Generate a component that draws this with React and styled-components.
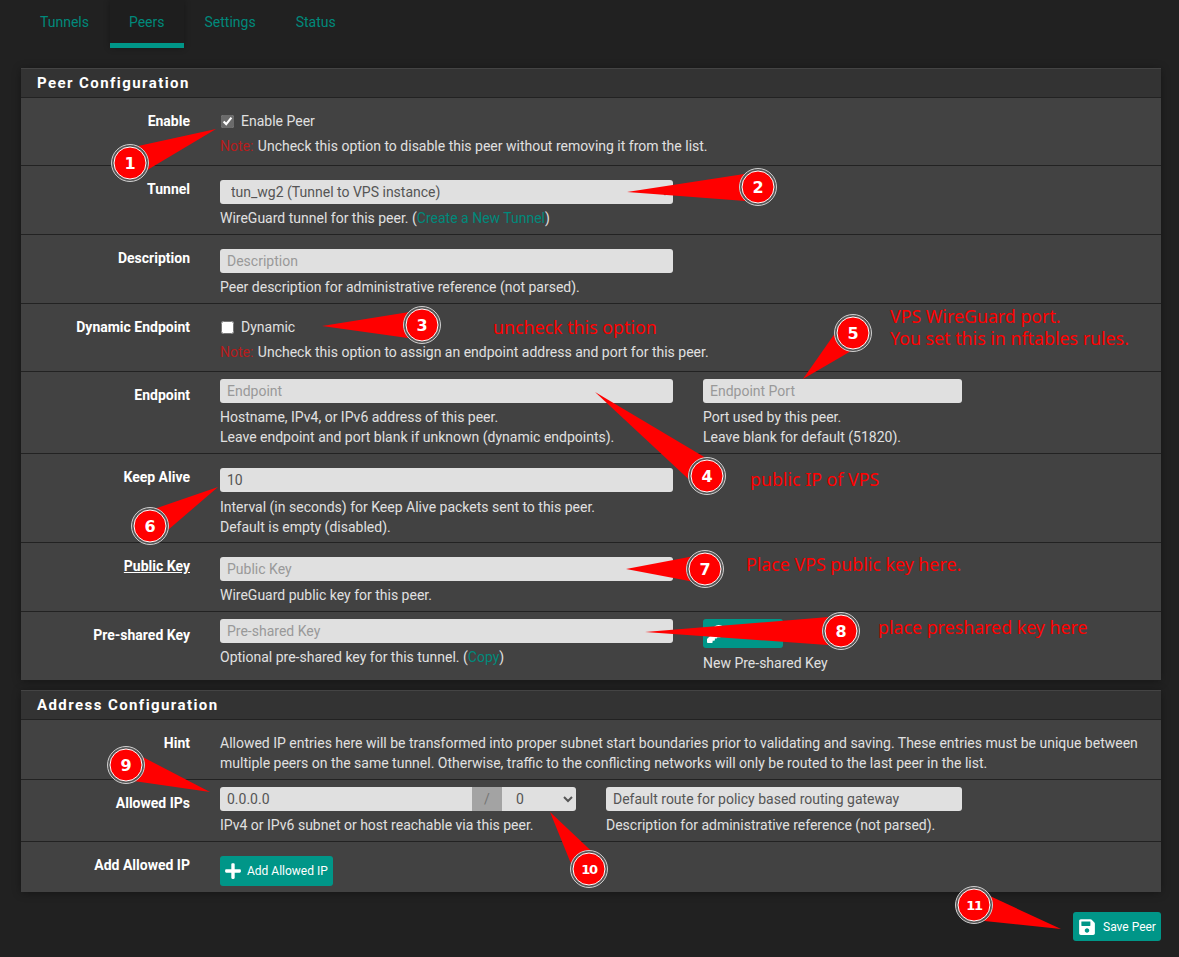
import React from "react";
import styled, { createGlobalStyle } from "styled-components";
import { FaKey, FaPlus, FaSave } from "react-icons/fa";

const GlobalStyle = createGlobalStyle`
  html, body {
    margin: 0;
    padding: 0;
    background: #212121;
  }
  body {
    font-family: Roboto, "Liberation Sans", sans-serif;
    font-size: 14px;
    line-height: 20px;
    color: #e0e0e0;
  }
`;

const Page = styled.div`
  position: relative;
  width: 1179px;
  height: 957px;
  overflow: hidden;
  box-sizing: border-box;
  padding: 0 18px 0 21px;
  background: #212121;
`;

const Tabs = styled.nav`
  display: flex;
  gap: 2px;
  height: 48px;
  margin-bottom: 20px;
`;

const Tab = styled.a`
  box-sizing: border-box;
  height: 48px;
  padding: 12px 19px 0;
  color: #00897b;
  background: ${(p) => (p.$active ? "#1e1e1e" : "transparent")};
  border-bottom: 5px solid ${(p) => (p.$active ? "#009688" : "transparent")};
  box-shadow: ${(p) => (p.$active ? "0 0 6px rgba(0,0,0,0.3)" : "none")};
`;

const Panel = styled.section`
  background: #424242;
  box-shadow: 0 1px 8px rgba(0, 0, 0, 0.35);
  margin-bottom: ${(p) => p.$after}px;
`;

const PanelHeading = styled.h2`
  box-sizing: border-box;
  height: 30px;
  margin: 0;
  padding: 4px 16px 0;
  background: #333333;
  border-top: 1px solid #444444;
  border-bottom: 1px solid #222222;
  font-size: 15px;
  line-height: 20px;
  font-weight: 700;
  letter-spacing: 1.42px;
  color: #ffffff;
`;

const Row = styled.div`
  box-sizing: border-box;
  display: grid;
  grid-template-columns: 169px 1fr;
  column-gap: 30px;
  height: ${(p) => p.$h}px;
  border-bottom: ${(p) => (p.$last ? "none" : "1px solid #222222")};
`;

const Label = styled.div`
  padding-top: 13px;
  text-align: right;
  font-weight: 700;
  color: #ffffff;
  text-decoration: ${(p) => (p.$underline ? "underline" : "none")};
`;

const Fields = styled.div`
  display: flex;
  gap: 30px;
  padding-top: ${(p) => p.$top}px;
`;

const Field = styled.div`
  width: ${(p) => p.$w}px;
`;

const TextInput = styled.input`
  box-sizing: border-box;
  display: block;
  width: 100%;
  height: 24px;
  padding: 0 7px;
  background: #e0e0e0;
  border: 0;
  border-radius: 3px;
  font: 14px Roboto, sans-serif;
  color: #555555;
  &::placeholder {
    color: #999999;
    opacity: 1;
  }
`;

const Select = styled.select`
  box-sizing: border-box;
  display: block;
  width: 100%;
  height: 24px;
  padding: 0 7px;
  background: #e0e0e0;
  border: 0;
  border-radius: 3px;
  font: 14px Roboto, sans-serif;
  color: #555555;
`;

const Help = styled.div`
  margin-top: ${(p) => p.$mt ?? 4}px;
`;

const Note = styled.span`
  color: #b71c1c;
  margin-right: 1px;
`;

const Link = styled.a`
  color: #00897b;
`;

const CheckLine = styled.label`
  display: flex;
  align-items: center;
  height: 20px;
  gap: 7px;
  input {
    width: 13px;
    height: 13px;
    margin: 0 0 0 1px;
    accent-color: #6b6b6b;
  }
`;

const InputGroup = styled.div`
  display: flex;
  height: 24px;
`;

const GroupInput = styled(TextInput)`
  flex: 1;
  border-radius: 3px 0 0 3px;
`;

const GroupAddon = styled.span`
  width: 30px;
  text-align: center;
  line-height: 24px;
  background: #a3a3a3;
  color: #757575;
`;

const GroupSelect = styled(Select)`
  width: 74px;
  padding-left: 10px;
  border-radius: 0 3px 3px 0;
`;

const Button = styled.button`
  display: flex;
  align-items: center;
  gap: ${(p) => p.$gap ?? 5}px;
  box-sizing: border-box;
  height: ${(p) => p.$h ?? 30}px;
  width: ${(p) => p.$w}px;
  padding: 0 4px 0 ${(p) => p.$left ?? 4}px;
  background: #009688;
  border: 0;
  border-radius: 3px;
  font: 12px Roboto, sans-serif;
  color: #ffffff;
  white-space: nowrap;
  svg {
    flex: none;
    font-size: 18px;
  }
`;

const Footer = styled.div`
  display: flex;
  justify-content: flex-end;
`;

const Overlay = styled.svg`
  position: absolute;
  left: 0;
  top: 0;
  pointer-events: none;
`;

const BadgeNumber = styled.text`
  font-family: "DejaVu Sans", sans-serif;
  font-weight: 700;
  font-size: ${(p) => (p.$wide ? 13 : 16)}px;
  letter-spacing: ${(p) => (p.$wide ? "-1.2px" : "0")};
  fill: #ffffff;
  text-anchor: middle;
`;

const RedText = styled.div`
  position: absolute;
  left: ${(p) => p.$x}px;
  top: ${(p) => p.$y}px;
  font-family: "Noto Sans", sans-serif;
  font-size: 17.8px;
  line-height: 22px;
  color: #ff0000;
  white-space: nowrap;
`;

const callouts = [
  { n: 1, x: 130, y: 163, tx: 216, ty: 129 },
  { n: 2, x: 758, y: 187, tx: 627, ty: 192 },
  { n: 3, x: 422, y: 325, tx: 322, ty: 326 },
  { n: 4, x: 707, y: 476, tx: 595, ty: 392 },
  { n: 5, x: 853, y: 333, tx: 803, ty: 379 },
  { n: 6, x: 150, y: 526, tx: 218, ty: 487 },
  { n: 7, x: 705, y: 569, tx: 626, ty: 569 },
  { n: 8, x: 841, y: 631, tx: 645, ty: 632 },
  { n: 9, x: 126, y: 765, tx: 210, ty: 792 },
  { n: 10, x: 589, y: 869, tx: 550, ty: 812 },
  { n: 11, x: 974, y: 905, tx: 1061, ty: 929 },
];

const redNotes = [
  { x: 493, y: 316, text: "uncheck this option" },
  { x: 890, y: 305, text: "VPS WireGuard port." },
  { x: 890, y: 327, text: "You set this in nftables rules." },
  { x: 750, y: 468, text: "public IP of VPS" },
  { x: 746, y: 553, text: "Place VPS public key here." },
  { x: 878, y: 616, text: "place preshared key here" },
];

function tailPoints({ x, y, tx, ty }) {
  const dx = tx - x;
  const dy = ty - y;
  const len = Math.hypot(dx, dy);
  const px = (-dy / len) * 15;
  const py = (dx / len) * 15;
  return `${tx},${ty} ${x + px},${y + py} ${x - px},${y - py}`;
}

function Callout({ c }) {
  const wide = c.n > 9;
  return (
    <g>
      <polygon points={tailPoints(c)} fill="#ff0000" />
      <circle cx={c.x} cy={c.y} r="18.5" fill="#555555" stroke="#d0d0d0" strokeWidth="1" />
      <circle cx={c.x} cy={c.y} r="16" fill="#ff0000" stroke="#ffffff" strokeWidth="1" />
      <BadgeNumber x={c.x} y={c.y + (wide ? 5 : 6)} $wide={wide}>
        {c.n}
      </BadgeNumber>
    </g>
  );
}

export default function App() {
  return (
    <Page>
      <GlobalStyle />
      <Tabs>
        <Tab>Tunnels</Tab>
        <Tab $active>Peers</Tab>
        <Tab>Settings</Tab>
        <Tab>Status</Tab>
      </Tabs>

      <Panel $after={10}>
        <PanelHeading>Peer Configuration</PanelHeading>

        <Row $h={68}>
          <Label>Enable</Label>
          <Fields $top={13}>
            <Field $w={900}>
              <CheckLine>
                <input type="checkbox" defaultChecked />
                Enable Peer
              </CheckLine>
              <Help $mt={5}>
                <Note>Note:</Note> Uncheck this option to disable this peer without removing it from the list.
              </Help>
            </Field>
          </Fields>
        </Row>

        <Row $h={69}>
          <Label>Tunnel</Label>
          <Fields $top={14}>
            <Field $w={453}>
              <Select defaultValue="wg2">
                <option value="wg2">tun_wg2 (Tunnel to VPS instance)</option>
              </Select>
              <Help>
                WireGuard tunnel for this peer. (<Link>Create a New Tunnel</Link>)
              </Help>
            </Field>
          </Fields>
        </Row>

        <Row $h={69}>
          <Label>Description</Label>
          <Fields $top={14}>
            <Field $w={453}>
              <TextInput placeholder="Description" />
              <Help>Peer description for administrative reference (not parsed).</Help>
            </Field>
          </Fields>
        </Row>

        <Row $h={68}>
          <Label>Dynamic Endpoint</Label>
          <Fields $top={13}>
            <Field $w={900}>
              <CheckLine>
                <input type="checkbox" />
                Dynamic
              </CheckLine>
              <Help $mt={5}>
                <Note>Note:</Note> Uncheck this option to assign an endpoint address and port for this peer.
              </Help>
            </Field>
          </Fields>
        </Row>

        <Row $h={82}>
          <Label>Endpoint</Label>
          <Fields $top={7}>
            <Field $w={453}>
              <TextInput placeholder="Endpoint" />
              <Help>
                Hostname, IPv4, or IPv6 address of this peer.
                <br />
                Leave endpoint and port blank if unknown (dynamic endpoints).
              </Help>
            </Field>
            <Field $w={259}>
              <TextInput placeholder="Endpoint Port" />
              <Help>
                Port used by this peer.
                <br />
                Leave blank for default (51820).
              </Help>
            </Field>
          </Fields>
        </Row>

        <Row $h={89}>
          <Label>Keep Alive</Label>
          <Fields $top={14}>
            <Field $w={453}>
              <TextInput defaultValue="10" />
              <Help $mt={5}>
                Interval (in seconds) for Keep Alive packets sent to this peer.
                <br />
                Default is empty (disabled).
              </Help>
            </Field>
          </Fields>
        </Row>

        <Row $h={69}>
          <Label $underline>Public Key</Label>
          <Fields $top={14}>
            <Field $w={453}>
              <TextInput placeholder="Public Key" />
              <Help>WireGuard public key for this peer.</Help>
            </Field>
          </Fields>
        </Row>

        <Row $h={68} $last>
          <Label>Pre-shared Key</Label>
          <Fields $top={7}>
            <Field $w={453}>
              <TextInput placeholder="Pre-shared Key" />
              <Help>
                Optional pre-shared key for this tunnel. (<Link>Copy</Link>)
              </Help>
            </Field>
            <Field $w={259}>
              <Button $w={80} $h={29}>
                <FaKey />
                Generate
              </Button>
              <Help $mt={5}>New Pre-shared Key</Help>
            </Field>
          </Fields>
        </Row>
      </Panel>

      <Panel $after={20}>
        <PanelHeading>Address Configuration</PanelHeading>

        <Row $h={60}>
          <Label>Hint</Label>
          <Fields $top={13}>
            <Field $w={925}>
              Allowed IP entries here will be transformed into proper subnet start boundaries prior to validating and
              saving. These entries must be unique between multiple peers on the same tunnel. Otherwise, traffic to the
              conflicting networks will only be routed to the last peer in the list.
            </Field>
          </Fields>
        </Row>

        <Row $h={62}>
          <Label>Allowed IPs</Label>
          <Fields $top={7}>
            <Field $w={356}>
              <InputGroup>
                <GroupInput defaultValue="0.0.0.0" />
                <GroupAddon>/</GroupAddon>
                <GroupSelect defaultValue="0">
                  <option value="0">0</option>
                </GroupSelect>
              </InputGroup>
              <Help>IPv4 or IPv6 subnet or host reachable via this peer.</Help>
            </Field>
            <Field $w={356}>
              <TextInput defaultValue="Default route for policy based routing gateway" />
              <Help>Description for administrative reference (not parsed).</Help>
            </Field>
          </Fields>
        </Row>

        <Row $h={50} $last>
          <Label>Add Allowed IP</Label>
          <Fields $top={14}>
            <Button $w={113}>
              <FaPlus />
              Add Allowed IP
            </Button>
          </Fields>
        </Row>
      </Panel>

      <Footer>
        <Button $w={88} $h={29} $left={5} $gap={7}>
          <FaSave />
          Save Peer
        </Button>
      </Footer>

      <Overlay width="1179" height="957" viewBox="0 0 1179 957">
        {callouts.map((c) => (
          <Callout key={c.n} c={c} />
        ))}
      </Overlay>
      {redNotes.map((note) => (
        <RedText key={note.text} $x={note.x} $y={note.y}>
          {note.text}
        </RedText>
      ))}
    </Page>
  );
}
